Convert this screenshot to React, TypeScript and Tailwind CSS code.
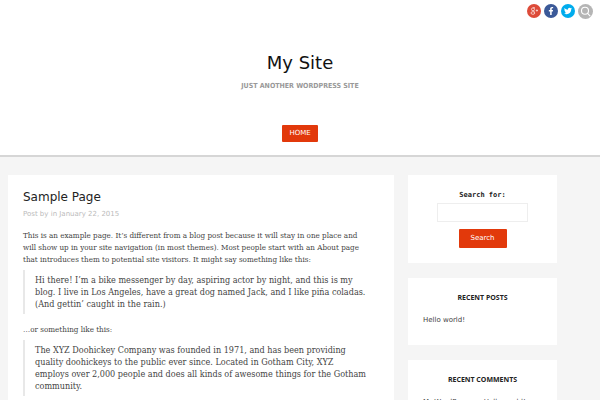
import { FaFacebookF, FaTwitter } from "react-icons/fa";

const serif = "font-['DejaVu_Serif_Condensed','DejaVu_Serif',serif]";

const socials = [
  { label: "Facebook", color: "bg-[#3b5998]", icon: <FaFacebookF className="size-2" /> },
  { label: "Twitter", color: "bg-[#00aced]", icon: <FaTwitter className="size-2" /> },
];

const SearchIcon = () => (
  <svg viewBox="0 0 15 15" className="size-[15px]" fill="none" stroke="white" strokeWidth="1.1">
    <circle cx="7" cy="6.8" r="3.5" />
    <path d="M9.6 9.4 12 11.8" strokeLinecap="round" />
  </svg>
);

const TopBar = () => (
  <div className="flex justify-end gap-[3px] pt-1 pr-[7px]">
    <a href="#google" aria-label="Google+" className="flex size-[14px] items-center justify-center rounded-full bg-[#dd4b39] text-[#f8d4cf]">
      <svg viewBox="0 0 14 14" className="size-[14px]" fill="none" stroke="currentColor" strokeWidth="0.9">
        <ellipse cx="6" cy="5.3" rx="1.5" ry="1.5" />
        <ellipse cx="5.9" cy="9" rx="1.9" ry="1.3" />
        <path d="M6 3.8h2M6.5 6.7 7.3 7.9M8.8 6.5h2.2M9.9 5.4v2.2" />
      </svg>
    </a>
    {socials.map((s) => (
      <a
        key={s.label}
        href="#social"
        aria-label={s.label}
        className={`flex size-[14px] items-center justify-center rounded-full text-white ${s.color}`}
      >
        {s.icon}
      </a>
    ))}
    <button aria-label="Open search" className="size-[15px] rounded-full bg-[#b5b5b5]">
      <SearchIcon />
    </button>
  </div>
);

const Header = () => (
  <header className="border-b-2 border-[#d6d6d6] bg-white text-center">
    <TopBar />
    <h1 className="mt-8 text-[18px] leading-6 text-[#111]">My Site</h1>
    <p className="mt-[5px] font-['DejaVu_Sans_Condensed','DejaVu_Sans',sans-serif] text-[7px] leading-3 font-bold text-[#999]">
      JUST ANOTHER WORDPRESS SITE
    </p>
    <nav className="mt-[33px] flex justify-center pb-[13px]">
      <a href="#home" className="rounded-[1px] bg-[#e2390b] px-[7px] text-[7px] leading-[17px] text-white">
        HOME
      </a>
    </nav>
  </header>
);

const Post = () => (
  <article className="min-w-0 flex-1 bg-white pt-[14px] pr-[27px] pb-8 pl-[15px]">
    <h2 className="text-[12px] leading-4 text-[#222]">Sample Page</h2>
    <p className="mt-[3px] text-[7px] leading-3 text-[#bbb]">Post by in January 22, 2015</p>
    <div className={`mt-[10px] text-[8px] leading-[12px] text-[#444] ${serif}`}>
      <p>
        This is an example page. It’s different from a blog post because it will stay in one place and will
        show up in your site navigation (in most themes). Most people start with an About page that
        introduces them to potential site visitors. It might say something like this:
      </p>
      <blockquote className="my-1 border-l-2 border-[#e8e8e8] py-1 pl-[10px] text-[9px] leading-[12px]">
        Hi there! I’m a bike messenger by day, aspiring actor by night, and this is my blog. I live in Los
        Angeles, have a great dog named Jack, and I like piña coladas. (And gettin’ caught in the rain.)
      </blockquote>
      <p className="mt-[10px]">…or something like this:</p>
      <blockquote className="my-1 border-l-2 border-[#e8e8e8] py-1 pl-[10px] text-[9px] leading-[12px]">
        The XYZ Doohickey Company was founded in 1971, and has been providing quality doohickeys to the
        public ever since. Located in Gotham City, XYZ employs over 2,000 people and does all kinds of
        awesome things for the Gotham community.
      </blockquote>
    </div>
  </article>
);

const WidgetTitle = ({ children }: { children: string }) => (
  <h3 className="text-center font-['Open_Sans',sans-serif] text-[7px] leading-3 font-bold text-[#222]">
    {children}
  </h3>
);

const Sidebar = () => (
  <aside className="flex w-[149px] flex-col gap-[15px]">
    <form className="flex flex-col items-center bg-white pt-[14px] pb-[15px]" onSubmit={(e) => e.preventDefault()}>
      <label htmlFor="s" className="font-['DejaVu_Sans_Mono',monospace] text-[7px] leading-3 font-bold text-[#222]">
        Search for:
      </label>
      <input id="s" type="text" className="mt-[2px] h-[19px] w-[91px] border border-[#eee] px-1 text-[7px] outline-none" />
      <button type="submit" className="mt-[7px] h-[19px] w-12 rounded-[1px] bg-[#e2390b] text-[7px] text-white">
        Search
      </button>
    </form>
    <section className="bg-white px-[15px] pt-[14px] pb-[19px]">
      <WidgetTitle>RECENT POSTS</WidgetTitle>
      <ul className="mt-[10px]">
        <li className="text-[7px] leading-3 text-[#444]">
          <a href="#hello">Hello world!</a>
        </li>
      </ul>
    </section>
    <section className="bg-white px-[15px] pt-[14px] pb-[19px]">
      <WidgetTitle>RECENT COMMENTS</WidgetTitle>
      <ul className="mt-[10px]">
        <li className="text-[7px] leading-3 text-[#444]">
          <a href="#comment">Mr WordPress</a> on <a href="#hello">Hello world!</a>
        </li>
      </ul>
    </section>
  </aside>
);

export default function App() {
  return (
    <div className="min-h-screen bg-[#f5f5f5] font-['DejaVu_Sans',sans-serif]">
      <Header />
      <main className="flex items-start gap-[14px] pt-[18px] pr-[43px] pb-8 pl-2">
        <Post />
        <Sidebar />
      </main>
    </div>
  );
}
